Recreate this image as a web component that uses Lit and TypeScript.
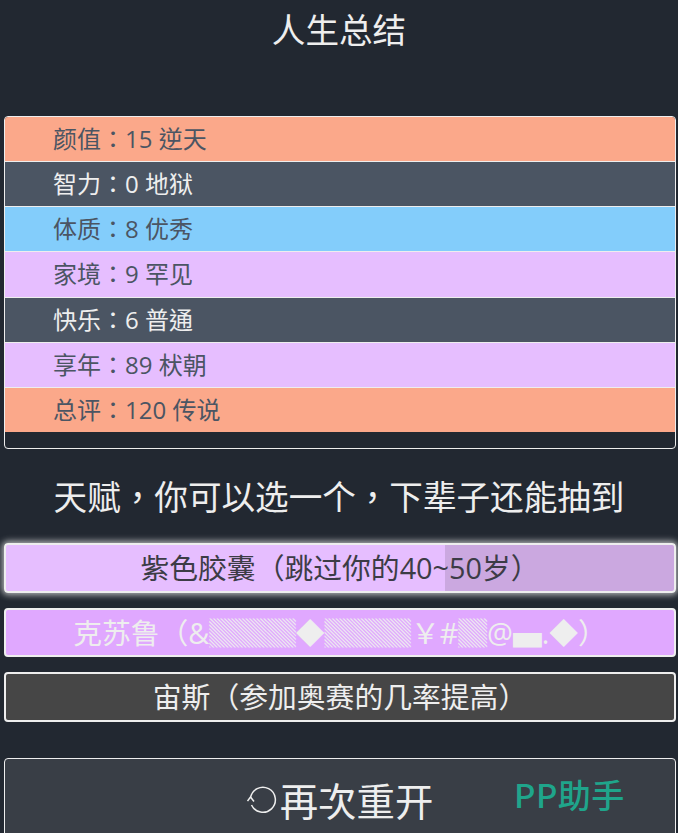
import { LitElement, html, css } from 'lit';
import { customElement } from 'lit/decorators.js';

const SUMMARY = [
  { label: '颜值', value: '15 逆天', grade: 'orange' },
  { label: '智力', value: '0 地狱', grade: 'dark' },
  { label: '体质', value: '8 优秀', grade: 'blue' },
  { label: '家境', value: '9 罕见', grade: 'purple' },
  { label: '快乐', value: '6 普通', grade: 'dark' },
  { label: '享年', value: '89 枤朝', grade: 'purple' },
  { label: '总评', value: '120 传说', grade: 'orange' }
];

@customElement('app-root')
export class AppRoot extends LitElement {
  static styles = css`
    :host {
      display: block;
      height: 833px;
      overflow: hidden;
      position: relative;
      background: #222831;
      color: #eeeeee;
      font-family: "Open Sans", "Noto Sans CJK TC", sans-serif;
    }

    .head {
      height: 116px;
      margin: 0;
      padding-top: 6px;
      box-sizing: border-box;
      text-align: center;
      font-size: 33.6px;
      font-weight: 400;
      line-height: 48px;
    }

    .summary {
      margin: 0 2px 0 4px;
      height: 333px;
      box-sizing: border-box;
      border: 1px solid #eeeeee;
      border-radius: 4px;
      overflow: hidden;
      list-style: none;
      padding: 0;
    }

    .summary li {
      height: 45.14px;
      box-sizing: border-box;
      padding-left: 48px;
      border-bottom: 1px solid #eeeeee;
      font-size: 24px;
      line-height: 44px;
      color: #4b5563;
    }

    .summary li:last-child {
      border-bottom: none;
      height: 44px;
    }

    .orange { background: #fba88a; }
    .dark { background: #4b5563; color: #eeeeee !important; }
    .blue { background: #83cdfb; }
    .purple { background: #e6beff; }

    .sub {
      height: 94px;
      margin: 0;
      text-align: center;
      font-size: 33.6px;
      font-weight: 400;
      line-height: 96px;
    }

    .talents {
      display: flex;
      flex-direction: column;
      gap: 15px;
      margin: 0 2px 0 4px;
    }

    .talent {
      height: 49.5px;
      box-sizing: border-box;
      border: 2px solid #eeeeee;
      border-radius: 4px;
      text-align: center;
      font-size: 28.8px;
      line-height: 45px;
      white-space: nowrap;
      overflow: hidden;
    }

    .selected {
      background: linear-gradient(to right, #e6beff 65.7%, #cba8e0 65.7%);
      color: #3c3c46;
      box-shadow: 0 0 6px 2px rgba(238, 238, 238, 0.7);
    }

    .cthulhu { background: #e0a8ff; }
    .zeus { background: #464646; }

    .restart {
      display: flex;
      justify-content: center;
      align-items: center;
      gap: 3px;
      margin: 36px 2px 0 4px;
      height: 84px;
      box-sizing: border-box;
      border: 1px solid #eeeeee;
      border-radius: 4px;
      background: #393e46;
      font-size: 38.4px;
      padding-bottom: 2px;
    }

    .restart svg { margin-top: 3px; }

    .watermark {
      position: absolute;
      left: 514px;
      top: 771px;
      color: #1fa58b;
      font-family: "Noto Sans CJK SC", sans-serif;
      font-size: 33px;
      font-weight: 500;
      line-height: 46px;
      letter-spacing: 0.5px;
    }
  `;

  render() {
    return html`
      <h1 class="head">人生总结</h1>
      <ul class="summary">
        ${SUMMARY.map(r => html`<li class=${r.grade}>${r.label}：${r.value}</li>`)}
      </ul>
      <h2 class="sub">天赋，你可以选一个，下辈子还能抽到</h2>
      <div class="talents">
        <div class="talent selected">紫色胶囊（跳过你的40~50岁）</div>
        <div class="talent cthulhu">克苏鲁（&amp;▓▓▓◆▓▓▓￥#▓@▄.◆）</div>
        <div class="talent zeus">宙斯（参加奥赛的几率提高）</div>
      </div>
      <div class="restart">
        <svg width="30" height="28" viewBox="0 0 30 28" fill="none" stroke="#eeeeee" stroke-width="1.5">
          <path d="M3.5 12 A12.5 12.5 0 1 1 4.5 19" />
          <path d="M0.5 15 L3.5 11 L7 15.5" />
        </svg>
        <span>再次重开</span>
      </div>
      <div class="watermark">PP助手</div>
    `;
  }
}
